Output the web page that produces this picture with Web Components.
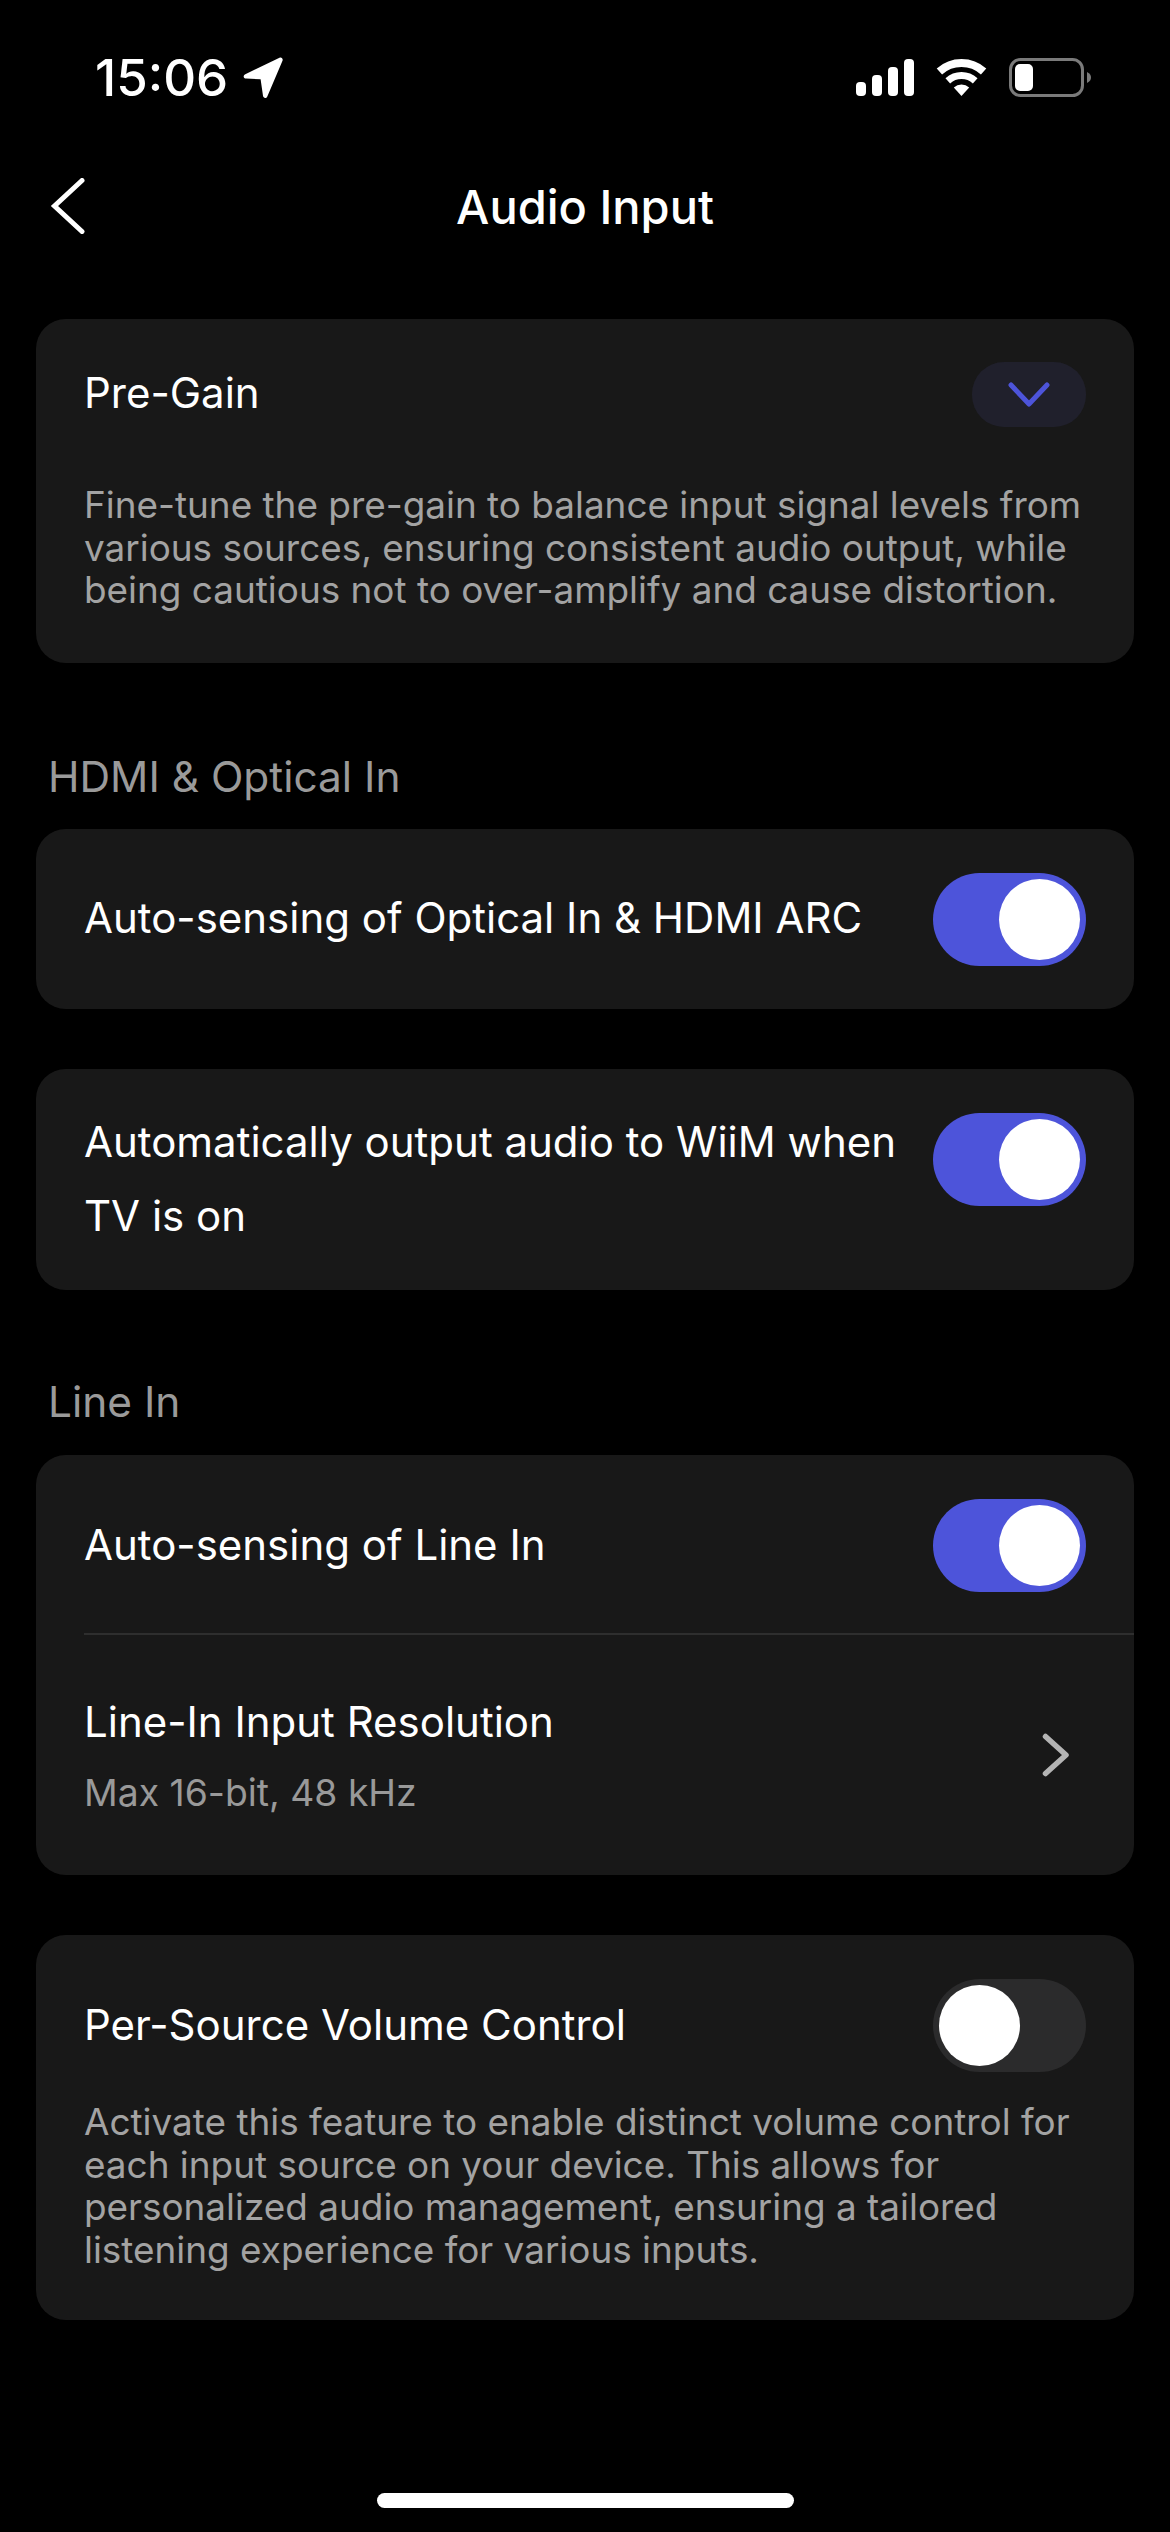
<!doctype html>
<html><head><meta charset="utf-8"><style>
html,body{margin:0;background:#000;}
body{width:1170px;height:2532px;overflow:hidden;font-family:Inter,"Liberation Sans",sans-serif;color:#fff;}
</style></head><body>
<app-screen>
<status-bar></status-bar>
<nav-bar>Audio Input</nav-bar>
<main-list>
<set-card style="height:344px">
  <set-row style="height:150px" label="Pre-Gain" control="expand"></set-row>
  <set-desc style="margin-top:15px">Fine-tune the pre-gain to balance input signal levels from<br>various sources, ensuring consistent audio output, while<br>being cautious not to over-amplify and cause distortion.</set-desc>
</set-card>
<sec-head style="margin:84px 0 22px">HDMI &amp; Optical In</sec-head>
<set-card><set-row style="height:180px" label="Auto-sensing of Optical In &amp; HDMI ARC" control="on"></set-row></set-card>
<set-card style="margin-top:60px"><set-row class="multi" style="height:221px" top label="Automatically output audio to WiiM when<br>TV is on" control="on"></set-row></set-card>
<sec-head style="margin:82px 0 23px">Line In</sec-head>
<set-card>
  <set-row style="height:178px;padding-top:3px" label="Auto-sensing of Line In" control="on"></set-row>
  <card-rule></card-rule>
  <set-row style="height:240px" label="Line-In Input Resolution" sub="Max 16-bit, 48 kHz" control="chev"></set-row>
</set-card>
<set-card style="margin-top:60px;height:385px">
  <set-row style="height:181px" label="Per-Source Volume Control" control="off"></set-row>
  <set-desc style="margin-top:-15px">Activate this feature to enable distinct volume control for<br>each input source on your device. This allows for<br>personalized audio management, ensuring a tailored<br>listening experience for various inputs.</set-desc>
</set-card>
</main-list>
<home-bar></home-bar>
</app-screen>
<script>
function def(name,html){customElements.define(name,class extends HTMLElement{connectedCallback(){if(this.shadowRoot)return;const s=this.attachShadow({mode:'open'});s.innerHTML=typeof html==='function'?html(this):html;}});}
def('app-screen',`<style>:host{display:flex;flex-direction:column;width:1170px;height:2532px;position:relative}</style><slot></slot>`);
def('status-bar',`<style>
:host{display:flex;justify-content:space-between;align-items:center;height:154px;box-sizing:border-box;padding:0 79px 0 95px;flex:none}
.t{display:flex;align-items:center;gap:15px;font:500 51px/1 Inter,sans-serif}
svg{display:block}
</style>
<div class="t"><span>15:06</span><svg width="40" height="41" viewBox="0 0 40 41"><path fill="#fff" d="M36.500 .8 2.300 17.200c-2.600 1.300-2 4.300.9 4.400l14.400.7 2.400 16.500c.4 2.600 3.300 2.900 4.300.6L39.500 3.800c.8-2-1-3.900-3-3z"/></svg></div>
<svg width="235" height="42" viewBox="0 0 235 42">
<g fill="#fff"><rect x="0" y="26" width="10" height="14" rx="4"/><rect x="16" y="19" width="10" height="21" rx="4"/><rect x="32" y="11" width="10" height="29" rx="4"/><rect x="48" y="3" width="10" height="37" rx="4"/>
<path d="M105.500 40 97.800 31.500A11.500 11.500 0 0 1 113.200 31.500Z"/></g>
<g fill="none" stroke="#fff"><path stroke-width="8" d="M83.400 15.500A33 33 0 0 1 127.600 15.500"/><path stroke-width="7" d="M91.800 24.800A20.500 20.500 0 0 1 119.200 24.800"/></g>
<rect x="154.500" y="3.500" width="72" height="36" rx="10" fill="none" stroke="#7a7a7a" stroke-width="3"/>
<rect x="159" y="8" width="18" height="27" rx="5" fill="#fff"/>
<path d="M231 16c3 1.500 4 3.500 4 5.500s-1 4-4 5.500z" fill="#7a7a7a"/>
</svg>`);
def('nav-bar',`<style>
:host{display:grid;grid-template-columns:1fr auto 1fr;align-items:center;height:106px;padding:0 50px;box-sizing:border-box;width:1170px;flex:none}
.t{font:500 47px/1 Inter,sans-serif;margin-top:-2px}
svg{display:block;margin-top:-3px}
</style><svg width="36" height="56" viewBox="0 0 36 56"><path d="M32 2.500 4.500 28 32 53.500" fill="none" stroke="#fff" stroke-width="5" stroke-linecap="round" stroke-linejoin="miter"/></svg><div class="t"><slot></slot></div><span></span>`);
def('main-list',`<style>:host{display:flex;flex-direction:column;padding:59px 36px 0;box-sizing:border-box}</style><slot></slot>`);
def('set-card',`<style>:host{display:block;background:#181818;border-radius:30px;overflow:hidden;flex:none}</style><slot></slot>`);
def('sec-head',`<style>:host{display:block;height:60px;padding-left:12px;font:400 42.400px/60px Inter,sans-serif;color:#9a9a9a;flex:none}</style><slot></slot>`);
def('set-desc',`<style>:host{display:block;padding:0 48px;font:400 36.900px/42.700px Inter,sans-serif;color:#a3a3a3;white-space:nowrap}</style><slot></slot>`);
def('card-rule',`<style>:host{display:block;height:2px;background:#2e2e2e;margin-left:48px}</style>`);
const ctl={
on:`<div class="sw on"><i></i></div>`,
off:`<div class="sw off"><i></i></div>`,
expand:`<div class="ex"><svg width="42" height="25" viewBox="0 0 42 25"><path d="M3 3l18 19L39 3" fill="none" stroke="#4d54da" stroke-width="5" stroke-linecap="round" stroke-linejoin="round"/></svg></div>`,
chev:`<svg class="ch" width="27" height="44" viewBox="0 0 27 44"><path d="M3.500 3.500 24 22 3.500 40.500" fill="none" stroke="#b4b4b4" stroke-width="5.500" stroke-linecap="round" stroke-linejoin="round"/></svg>`};
def('set-row',el=>`<style>
:host{display:flex;align-items:center;justify-content:space-between;box-sizing:border-box;padding:0 48px;flex:none}
:host([top]){align-items:flex-start;padding-top:36px}
:host([top]) .sw{margin-top:8px}
.b{padding-bottom:2px}
.l{font:400 42px/74px Inter,sans-serif;color:#fff;white-space:nowrap}
.s{font:400 37.300px/44px Inter,sans-serif;color:#999;margin-top:12px}
.b.sub{padding-bottom:10px}
.sw{width:153px;height:93px;border-radius:47px;position:relative;flex:none}
.sw i{position:absolute;top:6px;width:81px;height:81px;border-radius:50%;background:#fff}
.on{background:#4d54da}.on i{right:6px}
.off{background:#2b2b2c}.off i{left:6px}
.ex{width:114px;height:65px;border-radius:32px;background:#20202c;display:flex;align-items:center;justify-content:center}
.ch{margin-right:17px}
svg{display:block}
</style><div class="b${el.getAttribute('sub')?' sub':''}"><div class="l">${el.getAttribute('label')}</div>${el.getAttribute('sub')?`<div class="s">${el.getAttribute('sub')}</div>`:''}</div>${ctl[el.getAttribute('control')]||''}`);
def('home-bar',`<style>:host{position:absolute;left:377px;top:2493px;width:417px;height:15px;border-radius:8px;background:#fff}</style>`);
</script>
</body></html>
